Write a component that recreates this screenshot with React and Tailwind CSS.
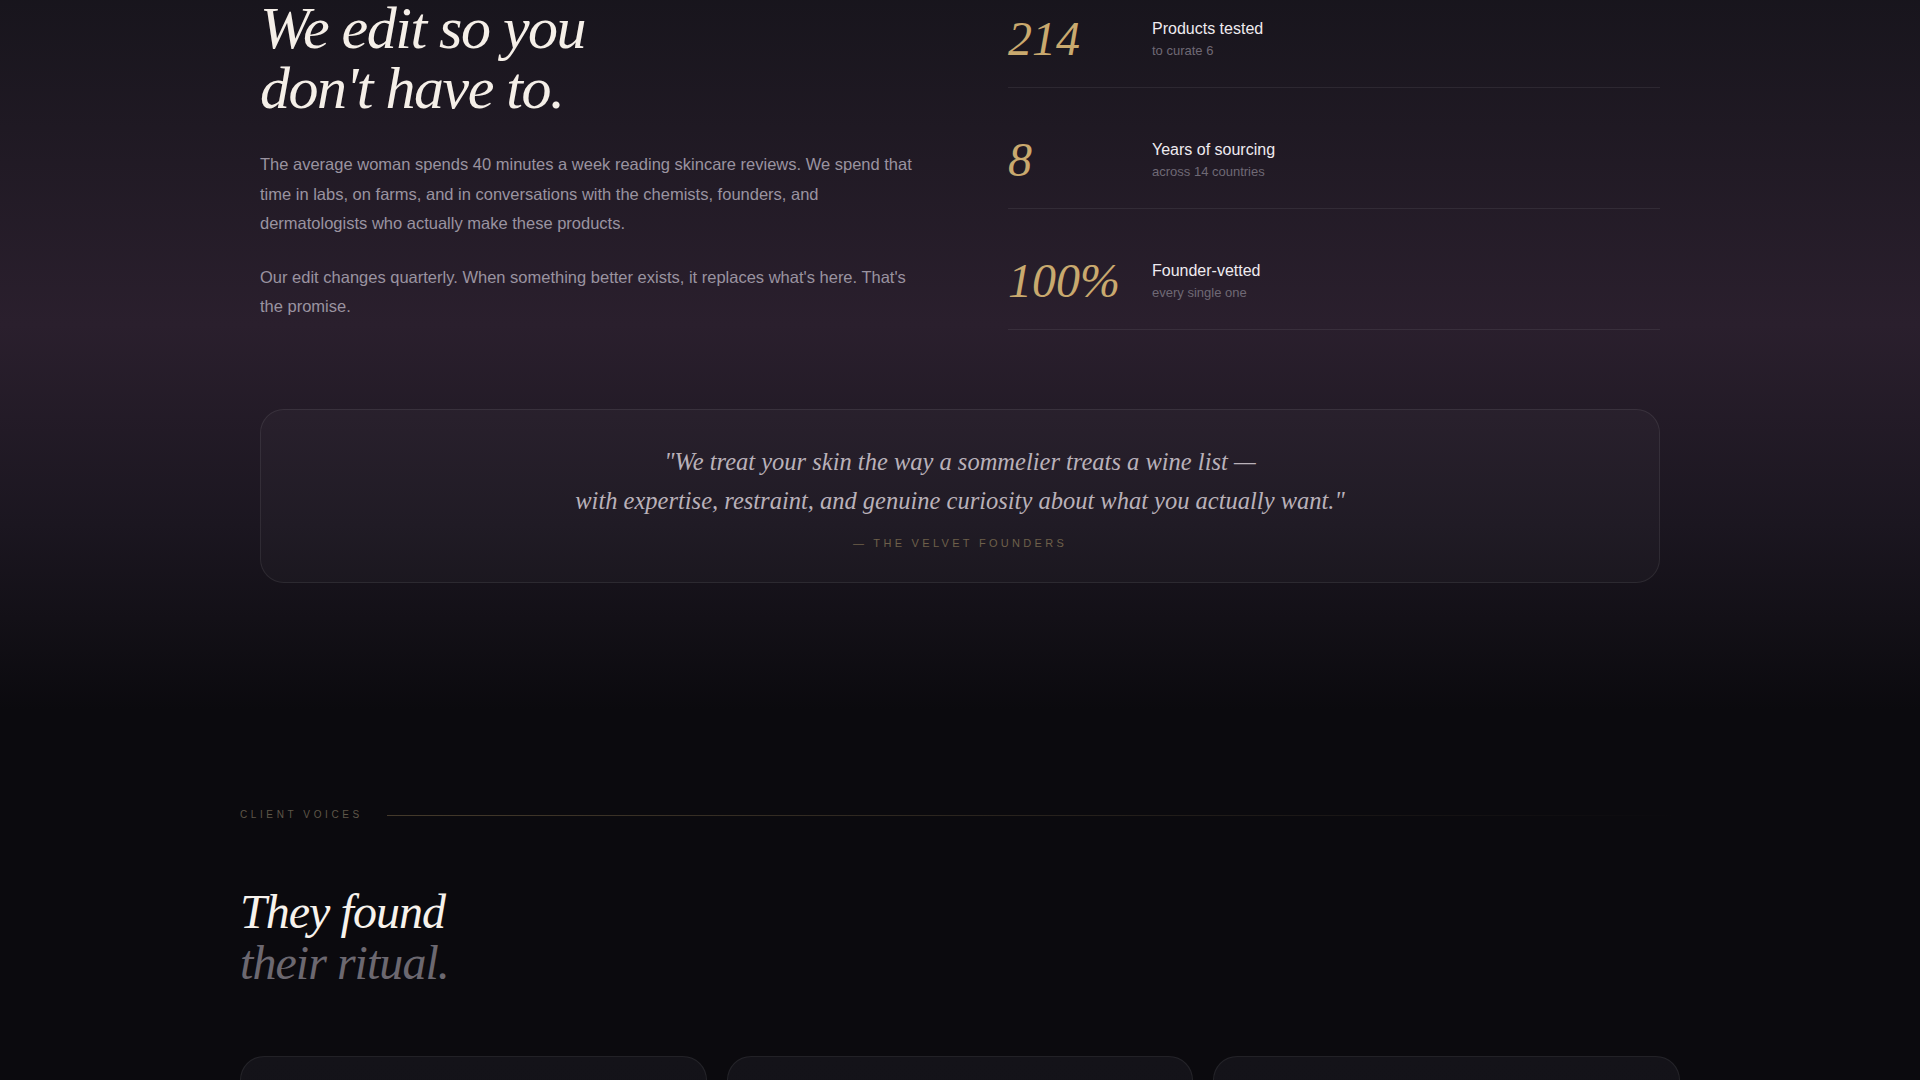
const serif = "font-['Liberation_Serif',Georgia,serif]";
const sans = "font-['Liberation_Sans',Arial,sans-serif]";

const stats = [
  { value: "214", label: "Products tested", sub: "to curate 6" },
  { value: "8", label: "Years of sourcing", sub: "across 14 countries" },
  { value: "100%", label: "Founder-vetted", sub: "every single one" },
];

function StatRow({ value, label, sub }) {
  return (
    <div className="flex items-end pt-12 pb-6 border-b border-white/[0.07]">
      <span className={`${serif} italic w-36 shrink-0 text-[48px] leading-none text-[#c9a96e]`}>{value}</span>
      <div className={`${sans} mb-[3px]`}>
        <p className="text-[16px] leading-6 text-[#efebf0]">{label}</p>
        <p className="text-[13px] leading-[19.5px] text-[#6f6975]">{sub}</p>
      </div>
    </div>
  );
}

export default function App() {
  return (
    <div className={`min-h-screen bg-[#0b0a0e] overflow-hidden ${sans}`}>
      {/* Philosophy */}
      <section className="-mt-[33px] pb-32 bg-[linear-gradient(180deg,#16141b_0%,#2a1f2d_48%,#1b1620_75%,#0b0a0e_100%)]">
        <div className="max-w-[1400px] mx-auto">
          <div className="grid grid-cols-2 gap-24 items-start">
            <div className="pt-[31px]">
              <h2 className={`${serif} italic text-[60px] leading-none tracking-[-0.025em] text-[#f5efe8]`}>
                We edit so you
                <br />
                don't have to.
              </h2>
              <p className="mt-8 text-[16.5px] leading-[29.5px] text-[#9a93a0]">
                The average woman spends 40 minutes a week reading skincare reviews. We spend that time in labs, on farms, and in conversations with the chemists, founders, and dermatologists who actually make these products.
              </p>
              <p className="mt-6 text-[16.5px] leading-[29.5px] text-[#9a93a0]">
                Our edit changes quarterly. When something better exists, it replaces what's here. That's the promise.
              </p>
            </div>
            <div>
              {stats.map((s) => (
                <StatRow key={s.label} {...s} />
              ))}
            </div>
          </div>

          <div className="mt-[79px] rounded-3xl border border-white/[0.08] bg-white/[0.025] pt-8 pb-[31px] text-center">
            <p className={`${serif} italic text-[24.5px] leading-[1.6] text-[#b9b1b9]`}>
              "We treat your skin the way a sommelier treats a wine list —
              <br />
              with expertise, restraint, and genuine curiosity about what you actually want."
            </p>
            <p className="mt-[15px] text-[11px] leading-4 uppercase tracking-[0.3em] text-[#6e604a]">— The Velvet Founders</p>
          </div>
        </div>
      </section>

      {/* Testimonials */}
      <section className="pt-[96px]">
        <div className="max-w-[1440px] mx-auto">
          <div className="flex items-center gap-6">
            <span className="text-[10px] leading-4 uppercase tracking-[0.36em] text-[#5f5749]">Client Voices</span>
            <div className="flex-1 h-px bg-gradient-to-r from-[#c9a96e]/30 via-[#c9a96e]/15 to-transparent" />
          </div>

          <h2 className={`${serif} italic mt-16 text-[48px] leading-[1.05] tracking-[-0.02em]`}>
            <span className="text-[#f7f2ec]">They found</span>
            <br />
            <span className="text-[#6c6870]">their ritual.</span>
          </h2>

          <div className="mt-[68px] grid grid-cols-3 gap-5">
            {[0, 1, 2].map((i) => (
              <div
                key={i}
                className="h-[360px] rounded-3xl border border-white/[0.07] bg-[linear-gradient(180deg,#141319_0%,#111016_100%)]"
              />
            ))}
          </div>
        </div>
      </section>
    </div>
  );
}
